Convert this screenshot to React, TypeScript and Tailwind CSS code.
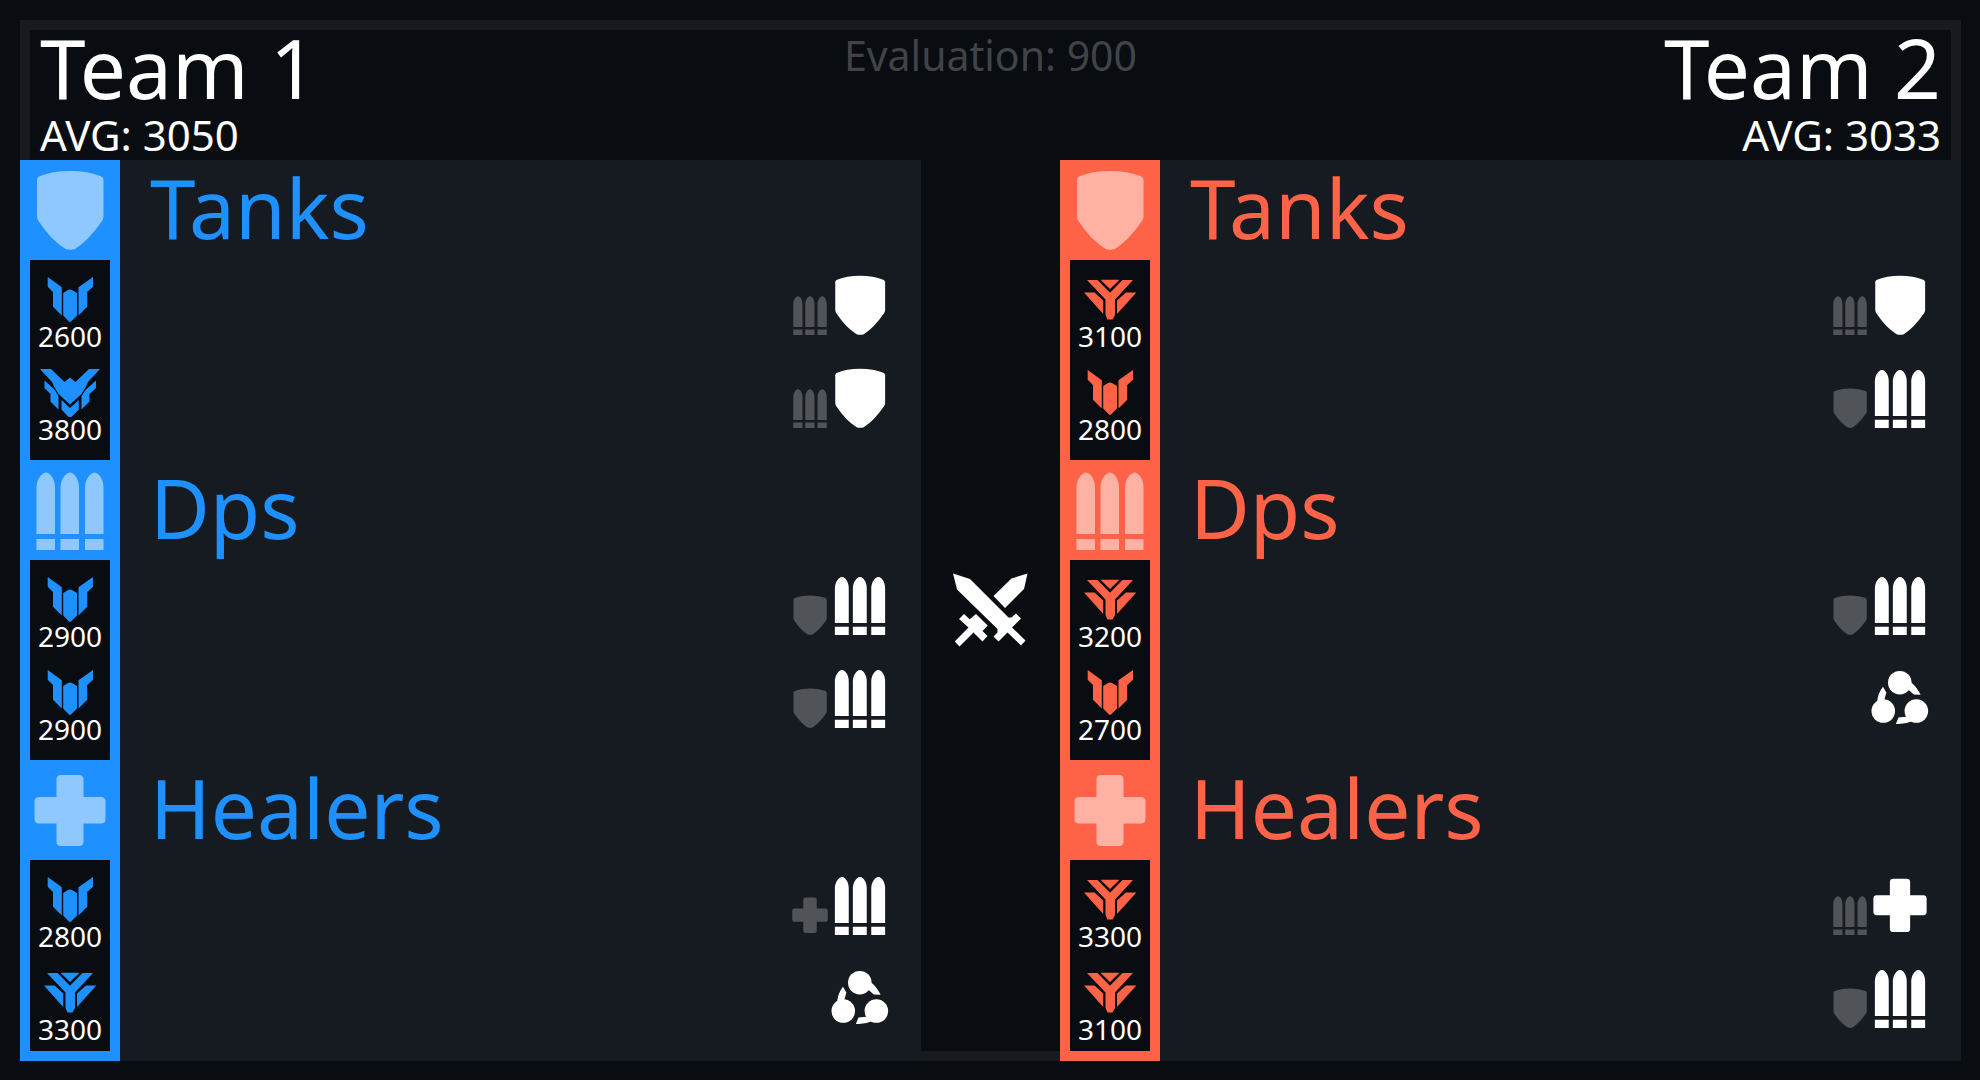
import React from "react";

type Role = "tank" | "dps" | "heal" | "flex";
type Rank = "platinum" | "diamond" | "master";
type Player = { sr: number; rank: Rank; main: Role; off?: Role };
type Group = { title: string; role: Role; players: Player[] };
type Side = "blue" | "red";

const team1: Group[] = [
  {
    title: "Tanks",
    role: "tank",
    players: [
      { sr: 2600, rank: "platinum", main: "tank", off: "dps" },
      { sr: 3800, rank: "master", main: "tank", off: "dps" },
    ],
  },
  {
    title: "Dps",
    role: "dps",
    players: [
      { sr: 2900, rank: "platinum", main: "dps", off: "tank" },
      { sr: 2900, rank: "platinum", main: "dps", off: "tank" },
    ],
  },
  {
    title: "Healers",
    role: "heal",
    players: [
      { sr: 2800, rank: "platinum", main: "dps", off: "heal" },
      { sr: 3300, rank: "diamond", main: "flex" },
    ],
  },
];

const team2: Group[] = [
  {
    title: "Tanks",
    role: "tank",
    players: [
      { sr: 3100, rank: "diamond", main: "tank", off: "dps" },
      { sr: 2800, rank: "platinum", main: "dps", off: "tank" },
    ],
  },
  {
    title: "Dps",
    role: "dps",
    players: [
      { sr: 3200, rank: "diamond", main: "dps", off: "tank" },
      { sr: 2700, rank: "platinum", main: "flex" },
    ],
  },
  {
    title: "Healers",
    role: "heal",
    players: [
      { sr: 3300, rank: "diamond", main: "heal", off: "dps" },
      { sr: 3100, rank: "diamond", main: "dps", off: "tank" },
    ],
  },
];

function RoleIcon({ role, className }: { role: Role; className: string }) {
  return (
    <svg viewBox="0 0 80 80" fill="currentColor" className={className} aria-hidden="true">
      {role === "tank" && (
        <path d="M7 9.500Q7 7.500 9.500 6.200Q22 1 40 1Q58 1 71 6.200Q73.500 7.500 73.500 9.500V46.500Q73.500 48.500 72 51Q59 70 45 79Q40 80.500 35.500 79Q21 70 8.500 51Q7 48.500 7 46.500Z" />
      )}
      {role === "dps" &&
        [6.5, 30.5, 55].map((x) => (
          <g key={x}>
            <path d={`M${x} 64V18C${x} 10 ${x + 4} 5 ${x + 7.5} 3Q${x + 9.5} 2 ${x + 11.5} 3C${x + 15} 5 ${x + 18.5} 10 ${x + 18.5} 18V64Z`} />
            <rect x={x} y="69" width="18.500" height="11" />
          </g>
        ))}
      {role === "heal" && (
        <path d="M31 5H49Q53.500 5 53.500 9.500V27H71Q75.500 27 75.500 31.500V49Q75.500 53.500 71 53.500H53.500V71.500Q53.500 76 49 76H31Q26.500 76 26.500 71.500V53.500H9Q4.500 53.500 4.500 49V31.500Q4.500 27 9 27H26.500V9.500Q26.500 5 31 5Z" />
      )}
      {role === "flex" && (
        <>
          <circle cx="39.700" cy="19.600" r="15.700" />
          <circle cx="17.700" cy="57.400" r="15.700" />
          <circle cx="61.800" cy="57.400" r="15.700" />
          <path d="M54 18.500Q62 24 67.500 35.800L58.500 35.300L50 28ZM17.300 25L21.800 32.500L19 43L9.500 46Q10 34 17.300 25ZM34.500 74.500L38 66L48 65L56 71Q46 75.500 34.500 74.500Z" />
        </>
      )}
    </svg>
  );
}

function RankIcon({ rank }: { rank: Rank }) {
  return (
    <svg viewBox="0 0 60 50" fill="currentColor" className="h-[50px] w-[60px]" aria-hidden="true">
      {rank === "platinum" && (
        <path d="M7.700 2L21.800 12.300V40.500L13 31.800V17L7.700 11.800ZM53 2L38.500 12.300V40.500L47.200 31.800V17L53 11.800ZM23.200 18L28 15Q30 14.200 32 15L37 18V40.500L31 46.500Q30 47.300 29 46.500L23.200 40.500Z" />
      )}
      {rank === "diamond" && (
        <path d="M20.500 4.700H39.500L30 14ZM7 5H17.500L30 17.800L42.500 5H53L35 24.500V40L32.500 44.500H27.500L25.500 40V24.500ZM4 17.500H14.500L23.200 25.500V39ZM56.300 17.500H46L37 25.500V39Z" />
      )}
      {rank === "master" && (
        <path d="M0 1H11L24.500 14L30 9.500L35.500 14L49 1H60L48 14L46 18.500L41.500 26L30 36.500L18.500 26L14 18.500L12 14ZM4.500 12.500L14.500 21.500L18.500 28V41.500L10.500 33.500V26L4.500 20ZM56 12.500L46 21.500L41.500 28V41.500L49.500 33.500V26L56 20ZM21.500 32L30 40L38.800 32V41.500L32 48.500Q30 49.500 28 48.500L21.500 41.500Z" />
      )}
    </svg>
  );
}

function Swords() {
  return (
    <svg viewBox="0 0 75 75" fill="currentColor" className="size-[75px]" aria-hidden="true">
      <path d="M0 0.500L17 6L55.500 44.500H58.500L63 40.500L68 45.500L59 54.500L72.500 67.500L68 72.500L54.500 59.500L45.500 68.500L40.500 63.500L44.500 59.500V56L4 16.500ZM74.500 0.500L71 16L52 35L40.500 23L58.500 5.500ZM23 41L34.700 52.500L29.500 58L34.500 63L29.500 68.500L20.500 59.500L6.500 73.500L1.700 68.500L15.500 54.500L6 46L11 41L16.700 46.300Z" />
    </svg>
  );
}

function Team({ side, groups }: { side: Side; groups: Group[] }) {
  const bar = side === "blue" ? "bg-[#1e90ff]" : "bg-[#ff6347]";
  const text = side === "blue" ? "text-[#1e90ff]" : "text-[#ff6347]";
  return (
    <section className="min-w-0 flex-1 bg-[#161b22]">
      {groups.map((g, i) => (
        <div key={g.title} className="flex">
          <div className={`w-[100px] shrink-0 ${bar} ${i === groups.length - 1 ? "pb-[10px]" : ""}`}>
            <div className="flex h-[100px] items-center justify-center text-white/50">
              <RoleIcon role={g.role} className="size-[80px]" />
            </div>
            <ul className={`mx-[10px] bg-[#090c10] pt-[15px] ${i === groups.length - 1 ? "h-[191px]" : "h-[200px]"}`}>
              {g.players.map((p, k) => (
                <li key={k} className={`flex h-[93px] flex-col items-center ${k > 0 ? "last:h-[80px]" : ""} ${text}`}>
                  <RankIcon rank={p.rank} />
                  <span className="text-[28px] leading-[22px] text-white">{p.sr}</span>
                </li>
              ))}
            </ul>
          </div>
          <div className="min-w-0 flex-1 pr-[31px] pl-[30px]">
            <h2 className={`h-[100px] text-[82px] leading-[94px] ${text}`}>{g.title}</h2>
            <ul className="pt-[15px]">
              {g.players.map((p, k) => (
                <li key={k} className="flex h-[93px] items-start justify-end last:h-[80px]">
                  {p.off && <RoleIcon role={p.off} className="mt-[20px] size-[40px] text-[#505357]" />}
                  <RoleIcon role={p.main} className="size-[60px] text-white" />
                </li>
              ))}
            </ul>
          </div>
        </div>
      ))}
    </section>
  );
}

export default function App() {
  return (
    <main className="min-h-screen bg-[#090c10] pt-5 pr-[19px] pb-[19px] pl-5 font-['Noto_Sans','Open_Sans',sans-serif] text-white">
      <div className="bg-[#171a1f]">
        <div className="px-[10px] pt-[10px]">
          <header className="grid h-[120px] grid-cols-3 bg-[#090c10] px-[10px] box-content pb-[10px]">
            <div>
              <h1 className="h-[80px] text-[82px] leading-[74px]">Team 1</h1>
              <p className="text-[42px] leading-[50px]">AVG: 3050</p>
            </div>
            <p className="text-center text-[41px] leading-[50px] text-[#404347]">Evaluation: 900</p>
            <div className="text-right">
              <h1 className="h-[80px] text-[82px] leading-[74px]">Team 2</h1>
              <p className="text-[42px] leading-[50px]">AVG: 3033</p>
            </div>
          </header>
        </div>
        <div className="flex">
          <Team side="blue" groups={team1} />
          <div className="mb-[10px] flex w-[139px] shrink-0 items-center justify-center bg-[#090c10] pt-[10px]">
            <Swords />
          </div>
          <Team side="red" groups={team2} />
        </div>
      </div>
    </main>
  );
}
